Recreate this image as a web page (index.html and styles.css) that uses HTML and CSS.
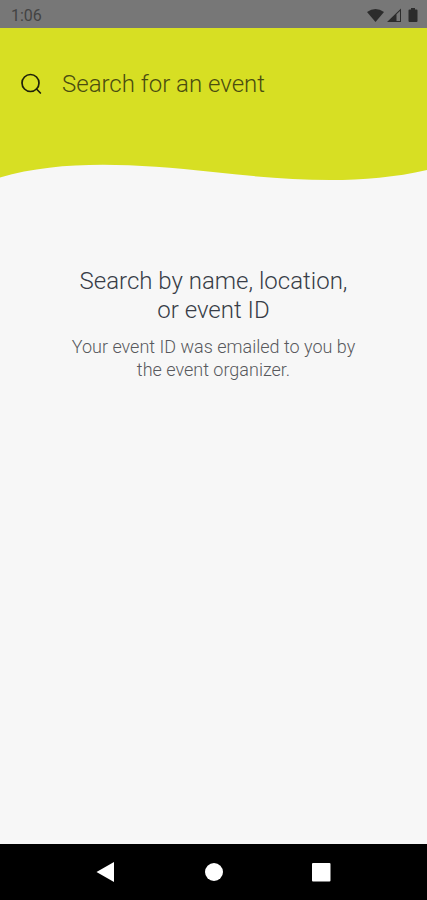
FILE: index.html
```html
<!DOCTYPE html>
<html lang="en">
<head>
<meta charset="utf-8">
<meta name="viewport" content="width=device-width, initial-scale=1">
<title>Search for an event</title>
<link rel="stylesheet" href="styles.css">
</head>
<body>
<div class="status-bar">
  <time class="clock">1:06</time>
  <div class="status-icons">
    <svg width="18" height="16" viewBox="0 0 18 16" aria-hidden="true"><path d="M0 4Q8.500 -2 17 4L8.500 14Z"/></svg>
    <svg width="16" height="16" viewBox="0 0 16 16" aria-hidden="true"><path fill-rule="evenodd" d="M0 14L14 0.500V14ZM9.500 6.200V13H13V2.900Z"/></svg>
    <svg width="16" height="16" viewBox="0 0 16 16" aria-hidden="true"><path d="M6 0H10V1.500H11.500Q12.500 1.500 12.500 2.500V13Q12.500 14 11.500 14H4.500Q3.500 14 3.500 13V2.500Q3.500 1.500 4.500 1.500H6Z"/></svg>
  </div>
</div>
<header class="header">
  <form class="search" role="search">
    <label class="search-icon" for="event-search" aria-label="Search">
      <svg width="24" height="24" viewBox="0 0 24 24" aria-hidden="true"><circle cx="10.500" cy="11" r="8.500"/><path d="M16.500 17L20.400 21"/></svg>
    </label>
    <input class="search-input" id="event-search" type="text" placeholder="Search for an event">
  </form>
</header>
<svg class="wave" viewBox="0 0 427 20" preserveAspectRatio="none" aria-hidden="true"><path d="M0 0H427V8C360 23.500 290 18.500 213 10C130 1 60 -2 0 15.500Z"/></svg>
<main class="content">
  <h1 class="title">Search by name, location, or event ID</h1>
  <p class="hint">Your event ID was emailed to you by the event organizer.</p>
</main>
<nav class="nav-bar" aria-label="System">
  <button class="nav-button" type="button" aria-label="Back"><svg width="20" height="20" viewBox="0 0 20 20"><path d="M0.500 10L18 0V20Z"/></svg></button>
  <button class="nav-button" type="button" aria-label="Home"><svg width="20" height="20" viewBox="0 0 20 20"><circle cx="10" cy="10" r="9"/></svg></button>
  <button class="nav-button" type="button" aria-label="Recent apps"><svg width="20" height="20" viewBox="0 0 20 20"><rect x="0" y="1" width="18.500" height="18.500" rx="1"/></svg></button>
</nav>
</body>
</html>
```
FILE: styles.css
```css
* {
  box-sizing: border-box;
}

body {
  margin: 0;
  min-height: 100vh;
  display: flex;
  flex-direction: column;
  background: #f7f7f7;
  font-family: Roboto, "Liberation Sans", sans-serif;
}

.status-bar {
  display: flex;
  align-items: center;
  justify-content: space-between;
  height: 28px;
  padding: 3px 6px 0 11px;
  background: #777777;
  color: #434343;
}

.clock {
  font-size: 16px;
  line-height: 20px;
}

.status-icons {
  display: flex;
  gap: 2px;
  fill: #2c2c2c;
}

.header {
  height: 134px;
  padding: 36px 20px 0;
  background: #d7df23;
}

.search {
  display: flex;
  align-items: center;
  gap: 18px;
}

.search-icon {
  display: flex;
  fill: none;
  stroke: #1e200a;
  stroke-width: 1.7;
  stroke-linecap: round;
}

.search-input {
  flex: 1;
  min-width: 0;
  height: 40px;
  padding: 0;
  border: 0;
  outline: 0;
  background: transparent;
  color: #1e200a;
  font: 350 24px/28px Roboto, "Liberation Sans", sans-serif;
}

.search-input::placeholder {
  color: #4a4d10;
  opacity: 1;
}

.wave {
  display: block;
  width: 100%;
  height: 20px;
  fill: #d7df23;
}

.content {
  flex: 1;
  padding: 85px 68px 0;
  text-align: center;
}

.title {
  margin: 0;
  color: #383d47;
  font-size: 24px;
  font-weight: 350;
  line-height: 29px;
}

.hint {
  margin: 10px 0 0;
  color: #58595d;
  font-size: 18px;
  font-weight: 350;
  line-height: 23px;
}

.nav-bar {
  display: flex;
  justify-content: center;
  gap: 60px;
  height: 56px;
  background: #000000;
}

.nav-button {
  display: flex;
  align-items: center;
  justify-content: center;
  width: 48px;
  padding: 0;
  border: 0;
  background: transparent;
  fill: #ffffff;
}
```
